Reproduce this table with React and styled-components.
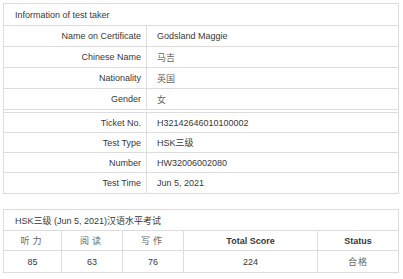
import React from 'react';
import styled, { createGlobalStyle } from 'styled-components';

const GlobalStyle = createGlobalStyle`
  body {
    margin: 0;
    background: #fff;
    color: #383838;
    font-family: "Liberation Sans", Arial, "Noto Sans CJK SC", sans-serif;
    font-size: 9px;
  }
`;

const Page = styled.div`
  padding: 3px 0 0 3px;
  display: flex;
  flex-direction: column;
  gap: 15px;
`;

const Card = styled.div`
  width: 396px;
  box-sizing: border-box;
  border: 1px solid #dcdcdc;
`;

const Caption = styled.div`
  height: ${p => p.$h}px;
  box-sizing: border-box;
  padding-left: 11px;
  display: flex;
  align-items: center;
  border-bottom: 1px solid #dcdcdc;
`;

const Group = styled.div`
  & + & {
    margin-top: 2px;
    border-top: 1px solid #dcdcdc;
  }
`;

const InfoRow = styled.div`
  display: grid;
  grid-template-columns: 143px 1fr;
  height: ${p => p.$h}px;
  box-sizing: border-box;
  border-bottom: 1px solid #dcdcdc;

  ${Group}:last-child &:last-child {
    border-bottom: none;
  }
`;

const Label = styled.div`
  display: flex;
  align-items: center;
  justify-content: flex-end;
  padding-right: 5px;
  border-right: 1px solid #dcdcdc;
`;

const Value = styled.div`
  display: flex;
  align-items: center;
  padding-left: 10px;
  color: ${p => (p.$cjk ? '#666' : 'inherit')};
`;

const ScoreRow = styled.div`
  display: grid;
  grid-template-columns: 58px 61px 61px 134px 1fr;
  height: ${p => p.$h}px;
  box-sizing: border-box;
  border-bottom: ${p => (p.$last ? 'none' : '1px solid #dcdcdc')};
`;

const Cell = styled.div`
  display: flex;
  align-items: center;
  justify-content: center;
  border-right: 1px solid #dcdcdc;
  font-weight: ${p => (p.$bold ? 700 : 400)};
  letter-spacing: ${p => p.$spacing || 0}px;
  color: ${p => (p.$cjk ? '#666' : 'inherit')};

  &:last-child {
    border-right: none;
  }
`;

const takerInfo = [
  ['Name on Certificate', 'Godsland Maggie'],
  ['Chinese Name', '马吉', true],
  ['Nationality', '英国', true],
  ['Gender', '女', true],
];

const testInfo = [
  ['Ticket No.', 'H32142646010100002'],
  ['Test Type', 'HSK三级'],
  ['Number', 'HW32006002080'],
  ['Test Time', 'Jun 5, 2021'],
];

export default function App() {
  return (
    <Page>
      <GlobalStyle />
      <Card>
        <Caption $h={22}>Information of test taker</Caption>
        <Group>
          {takerInfo.map(([k, v, cjk]) => (
            <InfoRow key={k} $h={21}>
              <Label>{k}</Label>
              <Value $cjk={cjk}>{v}</Value>
            </InfoRow>
          ))}
        </Group>
        <Group>
          {testInfo.map(([k, v]) => (
            <InfoRow key={k} $h={20}>
              <Label>{k}</Label>
              <Value>{v}</Value>
            </InfoRow>
          ))}
        </Group>
      </Card>

      <Card>
        <Caption $h={21}>HSK三级 (Jun 5, 2021)汉语水平考试</Caption>
        <ScoreRow $h={20}>
          <Cell $cjk $spacing={3}>听力</Cell>
          <Cell $cjk $spacing={3}>阅读</Cell>
          <Cell $cjk $spacing={3}>写作</Cell>
          <Cell $bold>Total Score</Cell>
          <Cell $bold>Status</Cell>
        </ScoreRow>
        <ScoreRow $h={21} $last>
          <Cell>85</Cell>
          <Cell>63</Cell>
          <Cell>76</Cell>
          <Cell>224</Cell>
          <Cell $cjk $spacing={1}>合格</Cell>
        </ScoreRow>
      </Card>
    </Page>
  );
}
